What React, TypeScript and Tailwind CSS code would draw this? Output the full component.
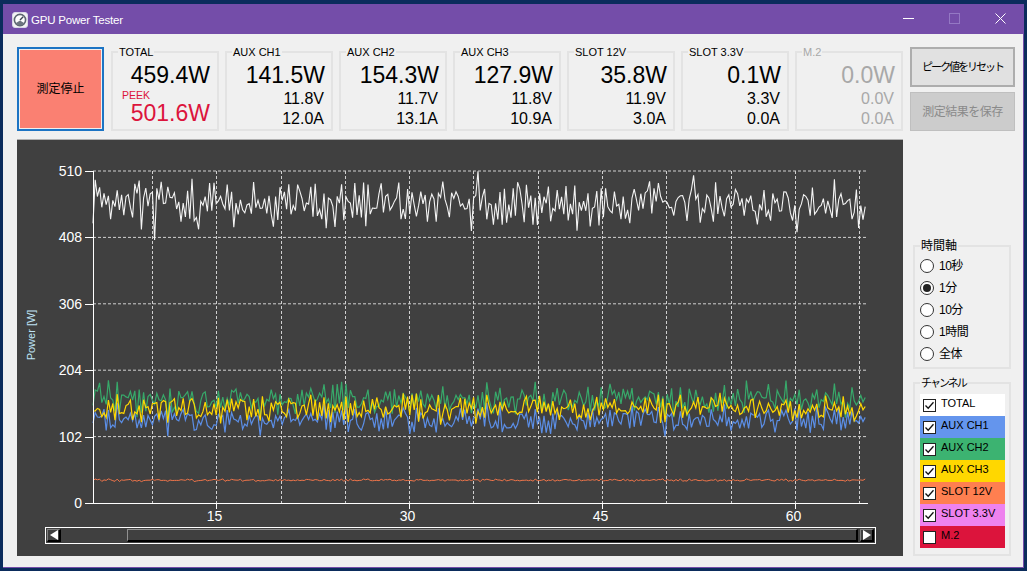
const latin = "font-['Liberation_Sans','Noto_Sans_CJK_JP',sans-serif]";

type Reading = { name: string; watt: string; volt: string; amp: string; off?: boolean };

const readings: Reading[] = [
  { name: "AUX CH1", watt: "141.5W", volt: "11.8V", amp: "12.0A" },
  { name: "AUX CH2", watt: "154.3W", volt: "11.7V", amp: "13.1A" },
  { name: "AUX CH3", watt: "127.9W", volt: "11.8V", amp: "10.9A" },
  { name: "SLOT 12V", watt: "35.8W", volt: "11.9V", amp: "3.0A" },
  { name: "SLOT 3.3V", watt: "0.1W", volt: "3.3V", amp: "0.0A" },
  { name: "M.2", watt: "0.0W", volt: "0.0V", amp: "0.0A", off: true },
];

const channels = [
  { name: "TOTAL", bg: "bg-white", on: true },
  { name: "AUX CH1", bg: "bg-[#6495ed]", on: true },
  { name: "AUX CH2", bg: "bg-[#3cb371]", on: true },
  { name: "AUX CH3", bg: "bg-[#ffd700]", on: true },
  { name: "SLOT 12V", bg: "bg-[#ff7f50]", on: true },
  { name: "SLOT 3.3V", bg: "bg-[#ee82ee]", on: true },
  { name: "M.2", bg: "bg-[#dc143c]", on: false },
];

const ranges = ["10秒", "1分", "10分", "1時間", "全体"];

const yTicks = [510, 408, 306, 204, 102, 0];
const xTicks = [15, 30, 45, 60];
const xGrid = [152, 216, 281, 345, 409, 473, 538, 602, 666, 731, 795, 859];

const toY = (w: number) => 503 - (w * 332) / 510;

// fake log data, seeded so the picture stays the same between runs
function series(seed: number, mean: number, amp: number) {
  let s = seed;
  const rnd = () => {
    s = (s * 16807) % 2147483647;
    return s / 2147483647 - 0.5;
  };
  for (let i = 0; i < 8; i++) rnd();
  const pts: string[] = [];
  for (let i = 0; i <= 351; i++) {
    const n = (rnd() + rnd() * 0.8 + (i % 2 ? 0.25 : -0.25)) * amp;
    pts.push(`${(93 + i * 2.2).toFixed(1)},${toY(mean + n).toFixed(1)}`);
  }
  return pts;
}

function totalLine() {
  const pts = series(4711, 461, 44);
  pts[28] = `${(93 + 28 * 2.2).toFixed(1)},240`;
  return pts.join(" ");
}

function Chart() {
  return (
    <svg viewBox="17 139 886 388" className="block w-[886px] h-[388px]">
      {yTicks.slice(0, 5).map((t) => (
        <line key={t} x1="93" x2="866" y1={toY(t)} y2={toY(t)} stroke="#d0d0d0" strokeDasharray="3 2" />
      ))}
      {xGrid.map((x) => (
        <line key={x} x1={x + 0.5} x2={x + 0.5} y1="171" y2="503" stroke="#d0d0d0" strokeDasharray="3 2" />
      ))}
      <polyline points={totalLine()} fill="none" stroke="#f4f4f4" strokeWidth="1.1" />
      <polyline points={series(101, 128, 24).join(" ")} fill="none" stroke="#5b8ee6" strokeWidth="1.2" />
      <polyline points={series(202, 158, 28).join(" ")} fill="none" stroke="#37a96a" strokeWidth="1.2" />
      <polyline points={series(303, 145, 24).join(" ")} fill="none" stroke="#ffd700" strokeWidth="1.2" />
      <polyline points={series(404, 35, 2).join(" ")} fill="none" stroke="#f0754a" strokeWidth="1" />
      <line x1="93.5" x2="93.5" y1="171" y2="503" stroke="#fff" />
      <line x1="85" x2="868" y1="503.5" y2="503.5" stroke="#fff" />
      {yTicks.map((t) => (
        <g key={t}>
          <line x1="85" x2="93" y1={Math.round(toY(t)) + 0.5} y2={Math.round(toY(t)) + 0.5} stroke="#fff" />
          <text x="82" y={toY(t) + 5} textAnchor="end" fill="#fff" fontSize="14" fontFamily="Liberation Sans">
            {t}
          </text>
        </g>
      ))}
      {xTicks.map((t, i) => {
        const x = 216.5 + i * 193;
        return (
          <g key={t}>
            <line x1={x} x2={x} y1="503" y2="509" stroke="#fff" />
            <text x={x - 2} y="521" textAnchor="middle" fill="#fff" fontSize="14" fontFamily="Liberation Sans">
              {t}
            </text>
          </g>
        );
      })}
      <text
        x="0"
        y="0"
        transform="translate(35 335) rotate(-90)"
        textAnchor="middle"
        fill="#bfe3f5"
        fontSize="11"
        fontFamily="Liberation Sans"
      >
        Power [W]
      </text>
    </svg>
  );
}

function ScrollBar() {
  return (
    <div className="ml-[28px] w-[831px] h-[17px] border border-white bg-[#404040] flex items-stretch p-px">
      <div className="w-[14px] border-t border-l border-[#808080] border-r-2 border-b-2 border-r-black border-b-black flex items-center justify-center">
        <svg viewBox="0 0 8 10" className="w-[8px] h-[10px]">
          <path d="M8 0V10L0 5Z" fill="#fff" />
        </svg>
      </div>
      <div className="w-[66px]" />
      <div className="flex-1 border-t border-l border-[#909090] border-r-2 border-b-2 border-r-black border-b-black" />
      <div className="w-[2px]" />
      <div className="w-[14px] border-t border-l border-[#808080] border-r-2 border-b-2 border-r-black border-b-black flex items-center justify-center">
        <svg viewBox="0 0 8 10" className="w-[8px] h-[10px]">
          <path d="M0 0V10L8 5Z" fill="#fff" />
        </svg>
      </div>
    </div>
  );
}

function Card({ r }: { r: Reading }) {
  return (
    <fieldset className="w-[108px] h-[84px] border-2 border-[#e3e3e3] pl-[5px]">
      <legend className={`text-[11px] leading-[10px] px-px ${r.off ? "text-[#a8a8a8]" : "text-black"}`}>{r.name}</legend>
      <div className={`flex flex-col items-end pr-[6px] mt-[5px] ${r.off ? "text-[#a8a8a8]" : "text-black"}`}>
        <div className="text-[23px] leading-[26px]">{r.watt}</div>
        <div className="text-[16px] leading-[20px] pr-px mt-px">{r.volt}</div>
        <div className="text-[16px] leading-[20px] pr-px">{r.amp}</div>
      </div>
    </fieldset>
  );
}

function TotalCard() {
  return (
    <fieldset className="w-[108px] h-[84px] border-2 border-[#e3e3e3] pl-[5px]">
      <legend className="text-[11px] leading-[10px] px-px text-black">TOTAL</legend>
      <div className="flex flex-col pr-[7px] mt-[5px]">
        <div className="text-[23px] leading-[26px] text-right text-black">459.4W</div>
        <div className="text-[10.5px] leading-[11px] mt-[2px] pl-[4px] text-[#dc143c]">PEEK</div>
        <div className="text-[23px] leading-[26px] -mt-px text-right text-[#dc143c]">501.6W</div>
      </div>
    </fieldset>
  );
}

function Check({ on }: { on: boolean }) {
  return (
    <span className="w-[13px] h-[13px] shrink-0 bg-white border border-[#222] flex items-center justify-center">
      {on && (
        <svg viewBox="0 0 11 11" className="w-[11px] h-[11px]">
          <path d="M1.5 5.5 4.2 8.3 9.5 2.2" fill="none" stroke="#111" strokeWidth="1.3" />
        </svg>
      )}
    </span>
  );
}

function TitleIcon() {
  return (
    <svg viewBox="0 0 16 16" className="w-[16px] h-[16px]">
      <rect x="0.5" y="0.5" width="15" height="15" rx="2.5" fill="#f4f4f4" stroke="#d8d8e8" />
      <circle cx="8" cy="8" r="5.6" fill="#fff" stroke="#5c6670" strokeWidth="1.6" />
      <path d="M8 8 11.2 4.8" stroke="#3d4650" strokeWidth="1.4" />
      <path d="M3.5 11.2A5.6 5.6 0 0 0 12.5 11.2L8 8.6Z" fill="#6d7680" />
    </svg>
  );
}

export default function App() {
  return (
    <div className={`w-[1027px] h-[571px] bg-[#0b2c5c] pt-[4px] pl-[3px] ${latin}`}>
      <div className="w-[1021px] h-[564px] flex flex-col bg-[#f0f0f0] border-r border-b border-[#744da9]">
        <div className="h-[30px] shrink-0 bg-[#744da9] flex items-center pt-[2px] pl-[9px] text-white">
          <TitleIcon />
          <span className="ml-[3px] mt-px text-[11.5px] tracking-[-0.2px]">GPU Power Tester</span>
          <div className="ml-auto flex items-center -mt-[3px]">
            <svg viewBox="0 0 11 11" className="w-[11px] h-[11px] mr-[35px]">
              <path d="M0 5.5H11" stroke="#fff" />
            </svg>
            <svg viewBox="0 0 11 11" className="w-[11px] h-[11px] mr-[35px]">
              <rect x="0.5" y="0.5" width="10" height="10" fill="none" stroke="#9478c4" />
            </svg>
            <svg viewBox="0 0 11 11" className="w-[11px] h-[11px] mr-[17px]">
              <path d="M.5.5 10.5 10.5M10.5.5.5 10.5" stroke="#fff" />
            </svg>
          </div>
        </div>

        <div className="flex pl-[14px] pt-[13px] gap-[7px]">
          <button className="w-[87px] h-[84px] bg-[#fa8072] border-2 border-[#1c74c4] shadow-[inset_0_0_0_1px_#f0f0f0] text-[12px] text-black">
            測定停止
          </button>
          <div className="flex gap-[6px]">
            <TotalCard />
            {readings.map((r) => (
              <Card key={r.name} r={r} />
            ))}
          </div>
          <div className="flex flex-col gap-[5px]">
            <button className="w-[105px] h-[40px] bg-[#e1e1e1] border-2 border-[#adadad] text-[11px] tracking-[-2px] text-black">
              ピーク値をリセット
            </button>
            <button className="w-[105px] h-[39px] bg-[#cccccc] border border-[#bfbfbf] text-[12px] tracking-[-0.5px] text-[#8a8a8a]">
              測定結果を保存
            </button>
          </div>
        </div>

        <div className="flex pl-[14px] pt-[8px]">
          <div className="w-[886px] h-[417px] bg-[#404040] border-t border-[#b0b0b0]">
            <div className="-mt-px">
              <Chart />
            </div>
            <ScrollBar />
          </div>

          <div className="w-[98px] ml-[10px] flex flex-col justify-end">
            <fieldset className="h-[129px] border-2 border-[#e3e3e3] pl-[5px]">
              <legend className="text-[12px] leading-[12px] px-px text-black">時間軸</legend>
              <div className="flex flex-col mt-[3px]">
                {ranges.map((label, i) => (
                  <div key={label} className="h-[22px] flex items-center gap-[5px] text-[12px] tracking-[-0.5px] text-black">
                    <span className="w-[14px] h-[14px] rounded-full bg-white border border-[#333] flex items-center justify-center">
                      {i === 1 && <span className="w-[8px] h-[8px] rounded-full bg-[#222]" />}
                    </span>
                    {label}
                  </div>
                ))}
              </div>
            </fieldset>
            <fieldset className="h-[179px] mt-[8px] border-2 border-[#e3e3e3] pl-[5px]">
              <legend className="text-[11px] leading-[12px] tracking-[-2px] px-px text-black">チャンネル</legend>
              <div className="flex flex-col mt-[5px] w-[85px]">
                {channels.map((c) => (
                  <div key={c.name} className={`h-[22px] flex items-center pl-[3px] gap-[5px] text-[11px] text-black ${c.bg}`}>
                    <Check on={c.on} />
                    <span className="-mt-[3px]">{c.name}</span>
                  </div>
                ))}
              </div>
            </fieldset>
          </div>
        </div>
      </div>
    </div>
  );
}
